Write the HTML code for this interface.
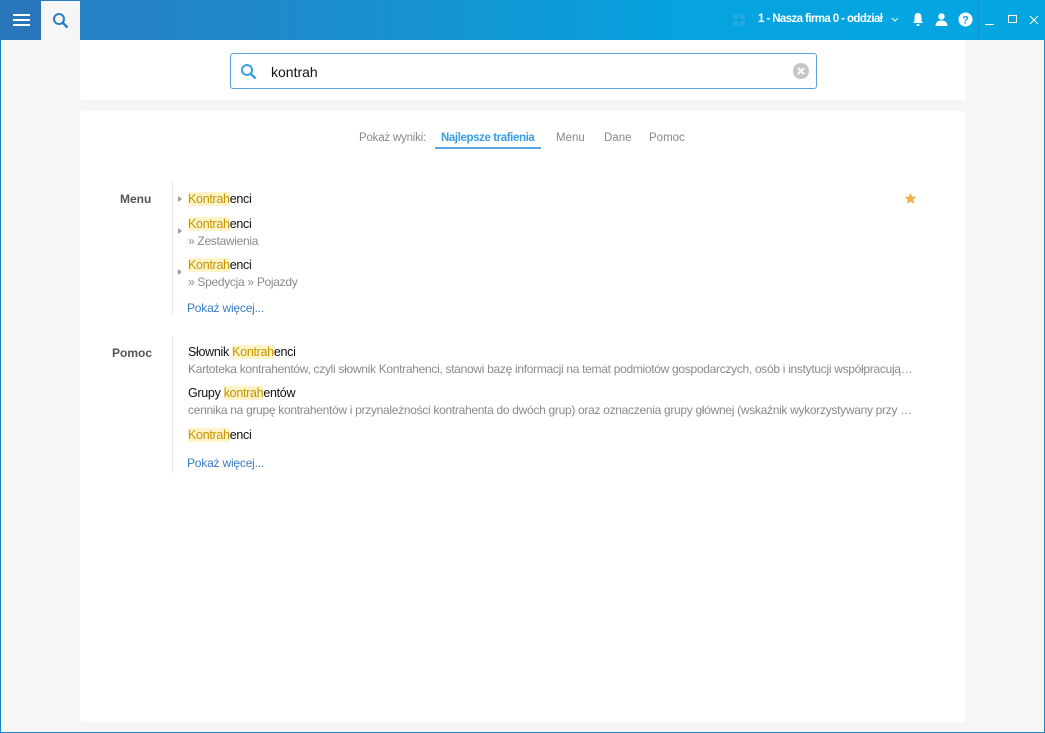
<!DOCTYPE html>
<html><head><meta charset="utf-8"><style>
*{margin:0;padding:0;box-sizing:border-box}
html,body{width:1045px;height:733px;overflow:hidden;font-family:"Liberation Sans",sans-serif;background:#f6f6f6;position:relative}
.abs{position:absolute}
#top{left:0;top:0;width:1045px;height:40px;background:linear-gradient(90deg,#2a7cc0 0%,#1a8fce 35%,#06a3df 65%,#03a6e1 100%)}
#ham{left:0;top:0;width:41px;height:40px;background:#2a76bb}
#tab{left:41px;top:1px;width:39px;height:39px;background:#f6f6f6}
#border{left:0;top:40px;width:1045px;height:693px;border:1px solid #1a86c9;border-top:none}
.panel{background:#fff;border-radius:3px}
.hl{background:#fff3c8;color:#c79300}
.lbl{font-size:12px;color:#555;font-weight:bold}
.t{font-size:12.5px;color:#111;letter-spacing:-0.3px;white-space:nowrap}
.s{font-size:12px;color:#8a8a8a;letter-spacing:-0.3px;white-space:nowrap}
.lnk{font-size:12px;color:#3a7bc4;letter-spacing:-0.2px}
.tri{width:0;height:0;border-left:4px solid #999;border-top:3.5px solid transparent;border-bottom:3.5px solid transparent}
.desc{width:730px;overflow:hidden;text-overflow:ellipsis}
</style></head><body>
<div id="top" class="abs"></div>
<div id="ham" class="abs"></div>
<div class="abs" style="left:13px;top:14px;width:17px;height:2px;background:#fff"></div>
<div class="abs" style="left:13px;top:19px;width:17px;height:2px;background:#fff"></div>
<div class="abs" style="left:13px;top:24px;width:17px;height:2px;background:#fff"></div>
<div id="tab" class="abs"></div>
<svg class="abs" style="left:52px;top:12px" width="18" height="18" viewBox="0 0 18 18"><circle cx="7" cy="7" r="5" fill="none" stroke="#2a7cc0" stroke-width="2"/><line x1="10.5" y1="10.5" x2="15.5" y2="15.5" stroke="#2a7cc0" stroke-width="2.4"/></svg>
<div id="border" class="abs"></div>
<!-- top right -->
<svg class="abs" style="left:733px;top:14px" width="13" height="13"><rect x="0" y="0" width="5" height="5" fill="#22a9e0"/><rect x="7" y="0" width="5" height="5" fill="#22a9e0"/><rect x="0" y="7" width="5" height="5" fill="#22a9e0"/><rect x="7" y="7" width="5" height="5" fill="#22a9e0"/></svg>
<div class="abs" style="left:758px;top:13px;font-size:11.5px;font-weight:bold;color:#fff;letter-spacing:-0.6px;white-space:nowrap">1 - Nasza firma 0 - oddział</div>
<svg class="abs" style="left:891px;top:17px" width="8" height="6"><polyline points="1,1 4,4 7,1" fill="none" stroke="#fff" stroke-width="1"/></svg>
<svg class="abs" style="left:911px;top:12px" width="14" height="15" viewBox="0 0 14 15"><path d="M7 1C4.5 1 3.5 3 3.5 5v4L2 11h10l-1.5-2V5C10.5 3 9.5 1 7 1z" fill="#fff"/><rect x="5.5" y="12" width="3" height="2" rx="1" fill="#fff"/></svg>
<svg class="abs" style="left:934px;top:12px" width="15" height="15" viewBox="0 0 15 15"><circle cx="7.5" cy="4.5" r="3.2" fill="#fff"/><path d="M1.5 14c0-4 3-5.5 6-5.5s6 1.5 6 5.5z" fill="#fff"/></svg>
<svg class="abs" style="left:958px;top:12px" width="15" height="15" viewBox="0 0 15 15"><circle cx="7.5" cy="7.5" r="7" fill="#fff"/><text x="7.5" y="11.5" text-anchor="middle" font-size="11" font-weight="bold" fill="#08a2de" font-family="Liberation Sans">?</text></svg>
<div class="abs" style="left:978px;top:0;width:1px;height:40px;background:#1590c8"></div>
<div class="abs" style="left:985px;top:24px;width:9px;height:1px;background:#fff"></div>
<div class="abs" style="left:1008px;top:15px;width:9px;height:8px;border:1px solid #fff"></div>
<svg class="abs" style="left:1029px;top:15px" width="10" height="10"><path d="M1 1L9 9M9 1L1 9" stroke="#fff" stroke-width="1.1"/></svg>
<!-- panels -->
<div class="abs panel" style="left:80px;top:40px;width:886px;height:60px;border-radius:0 0 3px 3px"></div>
<div class="abs" style="left:230px;top:53px;width:587px;height:36px;border:1px solid #5aa3dd;border-radius:3px;background:#fff"></div>
<svg class="abs" style="left:240px;top:63px" width="18" height="18" viewBox="0 0 18 18"><circle cx="7" cy="7" r="5" fill="none" stroke="#3a9ee0" stroke-width="2"/><line x1="10.5" y1="10.5" x2="15.5" y2="15.5" stroke="#3a9ee0" stroke-width="2.4"/></svg>
<div class="abs" style="left:271px;top:64px;font-size:14px;color:#111">kontrah</div>
<svg class="abs" style="left:793px;top:63px" width="16" height="16"><circle cx="8" cy="8" r="8" fill="#c6c6c6"/><path d="M5 5L11 11M11 5L5 11" stroke="#fff" stroke-width="2"/></svg>
<div class="abs panel" style="left:80px;top:111px;width:886px;height:611px"></div>
<!-- filters -->
<div class="abs" style="left:359px;top:132px;font-size:11.5px;color:#888;letter-spacing:-0.2px">Pokaż wyniki:</div>
<div class="abs" style="left:441px;top:132px;font-size:11.5px;color:#3a9ee0;font-weight:bold;letter-spacing:-0.4px">Najlepsze trafienia</div>
<div class="abs" style="left:435px;top:147px;width:106px;height:2px;background:#5aa6e2"></div>
<div class="abs" style="left:556px;top:132px;font-size:11.5px;color:#888">Menu</div>
<div class="abs" style="left:604px;top:132px;font-size:11.5px;color:#888">Dane</div>
<div class="abs" style="left:649px;top:132px;font-size:11.5px;color:#888">Pomoc</div>
<!-- Menu section -->
<div class="abs lbl" style="left:120px;top:192px">Menu</div>
<div class="abs" style="left:172px;top:181px;width:1px;height:134px;background:#e6e6e6"></div>
<div class="abs tri" style="left:178px;top:196px"></div>
<div class="abs t" style="left:188px;top:192px"><span class="hl">Kontrah</span>enci</div>
<svg class="abs" style="left:904px;top:192px" width="13" height="13" viewBox="0 0 24 24"><path d="M12 1.5l3.2 7 7.6.7-5.8 5 1.8 7.5L12 17.8 5.2 21.7 7 14.2l-5.8-5 7.6-.7z" fill="#f0ad48"/></svg>
<div class="abs tri" style="left:178px;top:228px"></div>
<div class="abs t" style="left:188px;top:217px"><span class="hl">Kontrah</span>enci</div>
<div class="abs s" style="left:188px;top:234px">» Zestawienia</div>
<div class="abs tri" style="left:178px;top:269px"></div>
<div class="abs t" style="left:188px;top:258px"><span class="hl">Kontrah</span>enci</div>
<div class="abs s" style="left:188px;top:275px">» Spedycja » Pojazdy</div>
<div class="abs lnk" style="left:187px;top:301px">Pokaż więcej...</div>
<!-- Pomoc section -->
<div class="abs lbl" style="left:112px;top:346px">Pomoc</div>
<div class="abs" style="left:172px;top:336px;width:1px;height:137px;background:#e6e6e6"></div>
<div class="abs t" style="left:188px;top:345px">Słownik <span class="hl">Kontrah</span>enci</div>
<div class="abs s desc" style="left:188px;top:362px">Kartoteka kontrahentów, czyli słownik Kontrahenci, stanowi bazę informacji na temat podmiotów gospodarczych, osób i instytucji współpracujących</div>
<div class="abs t" style="left:188px;top:386px">Grupy <span class="hl">kontrah</span>entów</div>
<div class="abs s desc" style="left:188px;top:403px">cennika na grupę kontrahentów i przynależności kontrahenta do dwóch grup) oraz oznaczenia grupy głównej (wskaźnik wykorzystywany przy ustalaniu cen</div>
<div class="abs t" style="left:188px;top:428px"><span class="hl">Kontrah</span>enci</div>
<div class="abs lnk" style="left:187px;top:456px">Pokaż więcej...</div>
</body></html>
